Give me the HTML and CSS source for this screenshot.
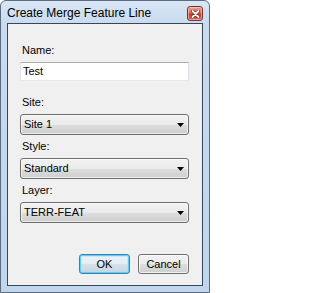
FILE: index.html
```html
<!DOCTYPE html>
<html>
<head>
<meta charset="utf-8">
<link rel="stylesheet" href="styles.css">
</head>
<body>
<div class="window">
  <div class="titlebar">
    <span class="title">Create Merge Feature Line</span>
    <span class="close">
      <svg width="9" height="8" viewBox="0 0 9 8"><path d="M1.5 1 L7.5 7 M7.5 1 L1.5 7" stroke="#6b2020" stroke-width="3.2" stroke-linecap="round"/><path d="M1.5 1 L7.5 7 M7.5 1 L1.5 7" stroke="#ffffff" stroke-width="1.8" stroke-linecap="round"/></svg>
    </span>
  </div>
  <div class="client">
    <div class="label">Name:</div>
    <div class="textbox">Test</div>
    <div class="label first-combo">Site:</div>
    <div class="combo"><span>Site 1</span><svg class="arrow" width="7" height="4" viewBox="0 0 7 4"><polygon points="0,0 7,0 3.5,4" fill="#000"/></svg></div>
    <div class="label">Style:</div>
    <div class="combo"><span>Standard</span><svg class="arrow" width="7" height="4" viewBox="0 0 7 4"><polygon points="0,0 7,0 3.5,4" fill="#000"/></svg></div>
    <div class="label">Layer:</div>
    <div class="combo"><span>TERR-FEAT</span><svg class="arrow" width="7" height="4" viewBox="0 0 7 4"><polygon points="0,0 7,0 3.5,4" fill="#000"/></svg></div>
    <div class="buttons">
      <div class="btn default">OK</div>
      <div class="btn">Cancel</div>
    </div>
  </div>
</div>
</body>
</html>
```
FILE: styles.css
```css
html, body {
  margin: 0;
  padding: 0;
  background: #ffffff;
}
body {
  font-family: "Liberation Sans", Arial, sans-serif;
  color: #000;
}
.window {
  box-sizing: border-box;
  width: 210px;
  height: 293px;
  border: 1px solid #5b6b80;
  border-radius: 6px 6px 0 0;
  background: linear-gradient(#dae6f4 0px, #c8dbf0 22px, #c0d5ee 100%);
  padding: 0 6px 6px 6px;
  display: flex;
  flex-direction: column;
}
.titlebar {
  height: 22px;
  display: flex;
  justify-content: space-between;
  align-items: flex-start;
}
.title {
  font-size: 12px;
  line-height: 15px;
  margin-top: 5px;
  margin-left: 0;
  white-space: nowrap;
}
.close {
  box-sizing: border-box;
  width: 16px;
  height: 15px;
  margin-top: 5px;
  border: 1px solid #7a2f2f;
  border-radius: 3px;
  background: linear-gradient(#e6a494 0%, #d66f5f 45%, #c4402e 55%, #d2685a 100%);
  box-shadow: inset 0 0 0 1px rgba(255,220,210,0.55);
  display: flex;
  align-items: center;
  justify-content: center;
}
.client {
  flex: 1;
  border: 1px solid #3a4656;
  background: #f0f0f0;
  padding: 20px 13px 0 12px;
  display: flex;
  flex-direction: column;
}
.label {
  font-size: 11px;
  line-height: 13px;
  height: 13px;
  padding-left: 2px;
  margin-bottom: 5px;
}
.textbox {
  box-sizing: border-box;
  height: 19px;
  background: #fff;
  border: 1px solid;
  border-color: #abadb3 #dbdfe6 #e3e9ef #e2e3ea;
  font-size: 11px;
  line-height: 17px;
  padding-left: 2px;
  margin-bottom: 15px;
}
.combo {
  box-sizing: border-box;
  height: 21px;
  border: 1px solid #707070;
  border-radius: 3px;
  background: linear-gradient(#f2f2f2 0%, #ebebeb 50%, #dddddd 51%, #cfcfcf 100%);
  box-shadow: inset 0 0 0 1px rgba(255,255,255,0.6);
  display: flex;
  align-items: center;
  justify-content: space-between;
  padding: 0 4px 0 3px;
  font-size: 11px;
  line-height: 13px;
  margin-bottom: 5px;
}
.arrow {
  display: block;
}
.buttons {
  display: flex;
  justify-content: flex-end;
  gap: 8px;
  margin-top: 26px;
}
.btn {
  box-sizing: border-box;
  width: 51px;
  height: 20px;
  border: 1px solid #707070;
  border-radius: 3px;
  background: linear-gradient(#f2f2f2 0%, #ebebeb 50%, #dddddd 51%, #cfcfcf 100%);
  box-shadow: inset 0 0 0 1px rgba(255,255,255,0.7);
  font-size: 11px;
  line-height: 18px;
  text-align: center;
}
.btn.default {
  border-color: #3c7fb1;
  box-shadow: inset 0 0 0 1px #5fd0f7, inset 0 0 0 2px rgba(170,225,250,0.5);
  background: linear-gradient(#eef4f8 0%, #e3ecf2 50%, #d3e1ea 51%, #c6d6e2 100%);
}
```
